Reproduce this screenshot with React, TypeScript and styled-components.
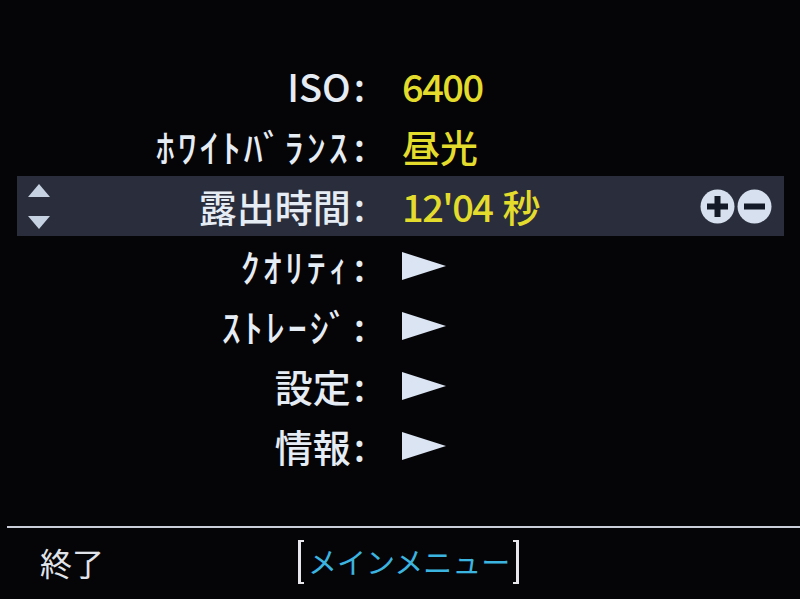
import React from "react";
import styled, { createGlobalStyle } from "styled-components";

const Global = createGlobalStyle`
  html, body { margin: 0; padding: 0; background: #050507; }
  body { width: 800px; height: 599px; overflow: hidden; }
`;

const Screen = styled.div`
  width: 800px;
  height: 599px;
  background: #050507;
  display: flex;
  flex-direction: column;
  font-family: "Noto Sans CJK JP", "Noto Sans", sans-serif;
  color: #e6ecf4;
`;

const Menu = styled.div`
  padding-top: 56px;
  display: flex;
  flex-direction: column;
`;

const Row = styled.div<{ $active?: boolean }>`
  height: 60px;
  margin: 0 16px 0 17px;
  display: grid;
  grid-template-columns: 348px 1fr auto;
  align-items: center;
  background: ${(p) => (p.$active ? "#2a2e3c" : "transparent")};
  padding-right: 12px;
`;

const LabelCell = styled.div`
  display: flex;
  align-items: center;
  justify-content: space-between;
  padding-left: 11px;
  height: 100%;
`;

const Label = styled.span<{ $kana?: boolean }>`
  margin-left: auto;
  font-size: 38px;
  font-weight: 500;
  line-height: 1;
  letter-spacing: ${(p) => (p.$kana ? "3px" : "0px")};
  color: #e6ecf4;
  white-space: nowrap;
`;

const Colon = styled.span`
  letter-spacing: 0;
  margin-left: 3px;
`;

const Value = styled.div`
  padding-left: 37px;
  font-size: 38px;
  font-weight: 500;
  line-height: 1;
  color: #e4dc2c;
  display: flex;
  align-items: center;
  white-space: nowrap;
`;

const Digits = styled.span`
  letter-spacing: -1.5px;
  margin-right: 10px;
`;

const Arrows = styled.div`
  display: flex;
  flex-direction: column;
  gap: 19px;
`;

const PlusMinus = styled.div`
  display: flex;
  gap: 2px;
`;

const Footer = styled.div`
  margin-top: auto;
  margin-left: 7px;
  border-top: 2px solid #c9ced8;
  height: 67px;
  display: grid;
  grid-template-columns: 291px auto;
  align-items: center;
  padding-bottom: 4px;
  box-sizing: content-box;
`;

const Exit = styled.span`
  padding-left: 33px;
  font-size: 32px;
  font-weight: 400;
  color: #e0e4ea;
  line-height: 1;
`;

const Bracket = styled.span`
  position: relative;
  display: inline-flex;
  align-items: center;
  height: 44px;
  padding: 0 6px 0 7px;
  border-left: 3px solid #e8e8ec;
  border-right: 3px solid #e8e8ec;
  font-size: 29px;
  color: #3cb4e0;
  line-height: 1;
  &::before,
  &::after {
    content: "";
    position: absolute;
    left: 0;
    right: 0;
    height: 2px;
    border-left: 3px solid #e8e8ec;
    border-right: 3px solid #e8e8ec;
    box-sizing: border-box;
  }
  &::before { top: 0; }
  &::after { bottom: 0; }
`;

const Tri = () => (
  <svg width="44" height="28" viewBox="0 0 44 28">
    <polygon points="0,0 44,14 0,28" fill="#dae4f2" />
  </svg>
);

const Up = () => (
  <svg width="22" height="13" viewBox="0 0 22 13">
    <polygon points="11,0 22,13 0,13" fill="#c6d2e2" />
  </svg>
);
const Down = () => (
  <svg width="22" height="13" viewBox="0 0 22 13">
    <polygon points="0,0 22,0 11,13" fill="#c6d2e2" />
  </svg>
);

const Circle = ({ plus }: { plus?: boolean }) => (
  <svg width="35" height="35" viewBox="0 0 35 35">
    <circle cx="17.5" cy="17.5" r="17" fill="#d6e0ee" />
    <rect x="7" y="14.5" width="21" height="6" fill="#151a28" />
    {plus && <rect x="14.5" y="7" width="6" height="21" fill="#151a28" />}
  </svg>
);

type Item = {
  label: string;
  kana?: boolean;
  num?: string;
  unit?: string;
  arrow?: boolean;
  active?: boolean;
};

const items: Item[] = [
  { label: "ISO", num: "6400" },
  { label: "ﾎﾜｲﾄﾊﾞﾗﾝｽ", kana: true, unit: "昼光" },
  { label: "露出時間", num: "12'04", unit: "秒", active: true },
  { label: "ｸｵﾘﾃｨ", kana: true, arrow: true },
  { label: "ｽﾄﾚｰｼﾞ", kana: true, arrow: true },
  { label: "設定", arrow: true },
  { label: "情報", arrow: true },
];

export default function App() {
  return (
    <>
      <Global />
      <Screen>
        <Menu>
          {items.map((it) => (
            <Row key={it.label} $active={it.active}>
              <LabelCell>
                {it.active && (
                  <Arrows>
                    <Up />
                    <Down />
                  </Arrows>
                )}
                <Label $kana={it.kana}>
                  {it.label}
                  <Colon>:</Colon>
                </Label>
              </LabelCell>
              <Value>
                {it.arrow ? (
                  <Tri />
                ) : (
                  <>
                    {it.num && <Digits>{it.num}</Digits>}
                    {it.unit}
                  </>
                )}
              </Value>
              {it.active ? (
                <PlusMinus>
                  <Circle plus />
                  <Circle />
                </PlusMinus>
              ) : (
                <span />
              )}
            </Row>
          ))}
        </Menu>
        <Footer>
          <Exit>終了</Exit>
          <span>
            <Bracket>メインメニュー</Bracket>
          </span>
        </Footer>
      </Screen>
    </>
  );
}
